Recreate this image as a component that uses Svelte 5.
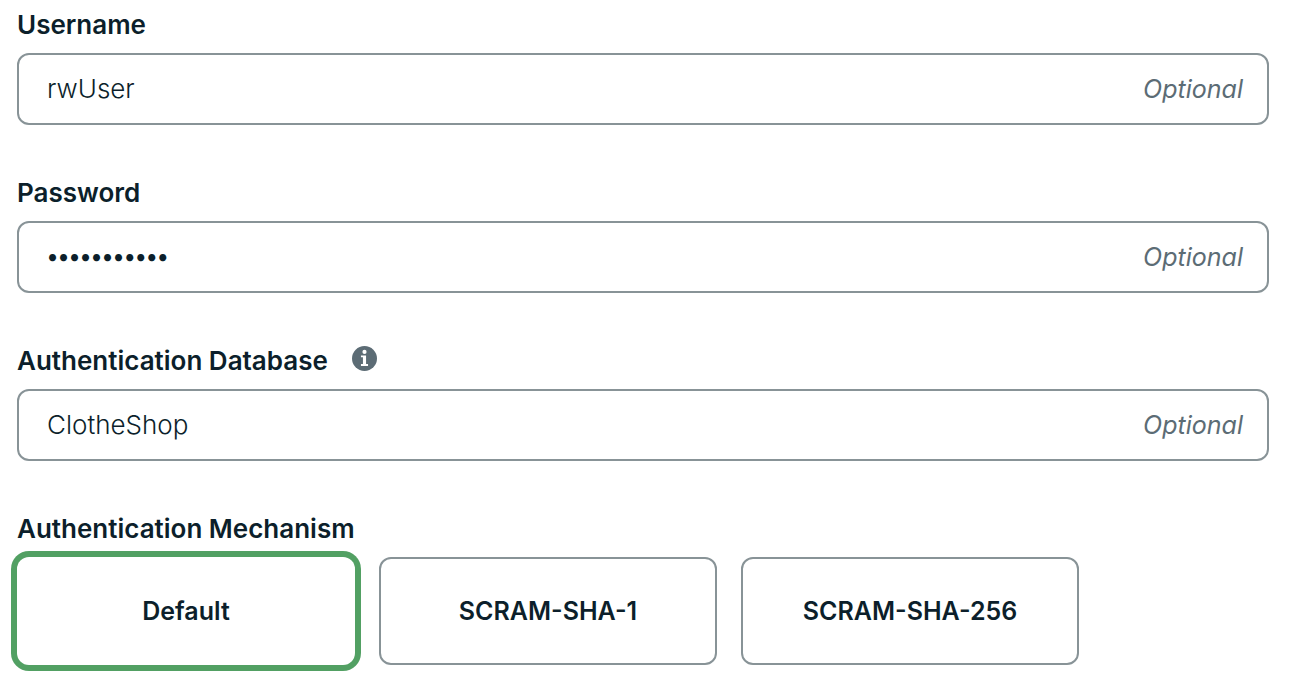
<script>
  let username = $state('rwUser');
  let password = $state('abcdefghijk');
  let database = $state('ClotheShop');
  let mechanism = $state('Default');
  const mechanisms = ['Default', 'SCRAM-SHA-1', 'SCRAM-SHA-256'];
</script>

<form autocomplete="off">
  <div class="field">
    <label for="username">Username</label>
    <div class="box">
      <input id="username" type="text" bind:value={username} />
      <span class="optional">Optional</span>
    </div>
  </div>

  <div class="field">
    <label for="password">Password</label>
    <div class="box">
      <input id="password" type="password" bind:value={password} />
      <span class="optional">Optional</span>
    </div>
  </div>

  <div class="field">
    <div class="heading">
      <label for="database">Authentication Database</label>
      <svg class="info" viewBox="0 0 24 24" aria-hidden="true">
        <circle cx="12" cy="12" r="12" fill="#5c6c75" />
        <circle cx="12" cy="5.7" r="2" fill="#fff" />
        <path d="M8.6 9h4.9v8.2h1.9v1.9H8.6v-1.9h1.9v-6.3H8.6z" fill="#fff" />
      </svg>
    </div>
    <div class="box">
      <input id="database" type="text" bind:value={database} />
      <span class="optional">Optional</span>
    </div>
  </div>

  <fieldset>
    <legend>Authentication Mechanism</legend>
    <div class="options">
      {#each mechanisms as name}
        <label class="option" class:selected={mechanism === name}>
          <input type="radio" name="mechanism" value={name} bind:group={mechanism} />
          <span>{name}</span>
        </label>
      {/each}
    </div>
  </fieldset>
</form>

<style>
  :global(body) {
    background: #fff;
  }

  form {
    display: flex;
    flex-direction: column;
    gap: 48px;
    padding: 5px 25px 28px 17px;
    color: #0c1f2b;
    font-family: Inter, "Noto Sans", sans-serif;
    font-size: 26px;
    line-height: 40px;
  }

  .field {
    display: flex;
    flex-direction: column;
    gap: 8px;
  }

  label,
  legend {
    font-weight: 600;
  }

  .heading {
    display: flex;
    align-items: flex-start;
    gap: 24px;
  }

  .info {
    width: 25px;
    height: 25px;
    margin-top: 5px;
  }

  .box {
    display: flex;
    align-items: center;
    box-sizing: border-box;
    height: 72px;
    padding: 0 24px 0 28px;
    border: 2px solid #889397;
    border-radius: 12px;
  }

  .box input {
    flex: 1;
    min-width: 0;
    padding: 0;
    border: 0;
    outline: 0;
    background: none;
    color: inherit;
    font: inherit;
    font-weight: 300;
  }

  .box input[type="password"] {
    font-family: Lato, sans-serif;
    font-size: 19px;
    font-weight: 400;
  }

  .optional {
    color: #5c6c75;
    font-size: 25px;
    font-style: italic;
  }

  fieldset {
    min-width: 0;
    margin: 0;
    padding: 0;
    border: 0;
  }

  legend {
    padding: 0;
  }

  .options {
    display: grid;
    grid-template-columns: repeat(3, minmax(0, 338px));
    gap: 24px;
    margin-top: 8px;
  }

  .option {
    display: flex;
    align-items: center;
    justify-content: center;
    box-sizing: border-box;
    height: 108px;
    border: 2px solid #889397;
    border-radius: 12px;
    font-size: 25px;
  }

  .option.selected {
    border-color: transparent;
    box-shadow: 0 0 0 6px #52a063;
  }

  .option input {
    appearance: none;
    width: 0;
    height: 0;
    margin: 0;
  }

  .option:focus-within {
    outline: 0;
  }
</style>
